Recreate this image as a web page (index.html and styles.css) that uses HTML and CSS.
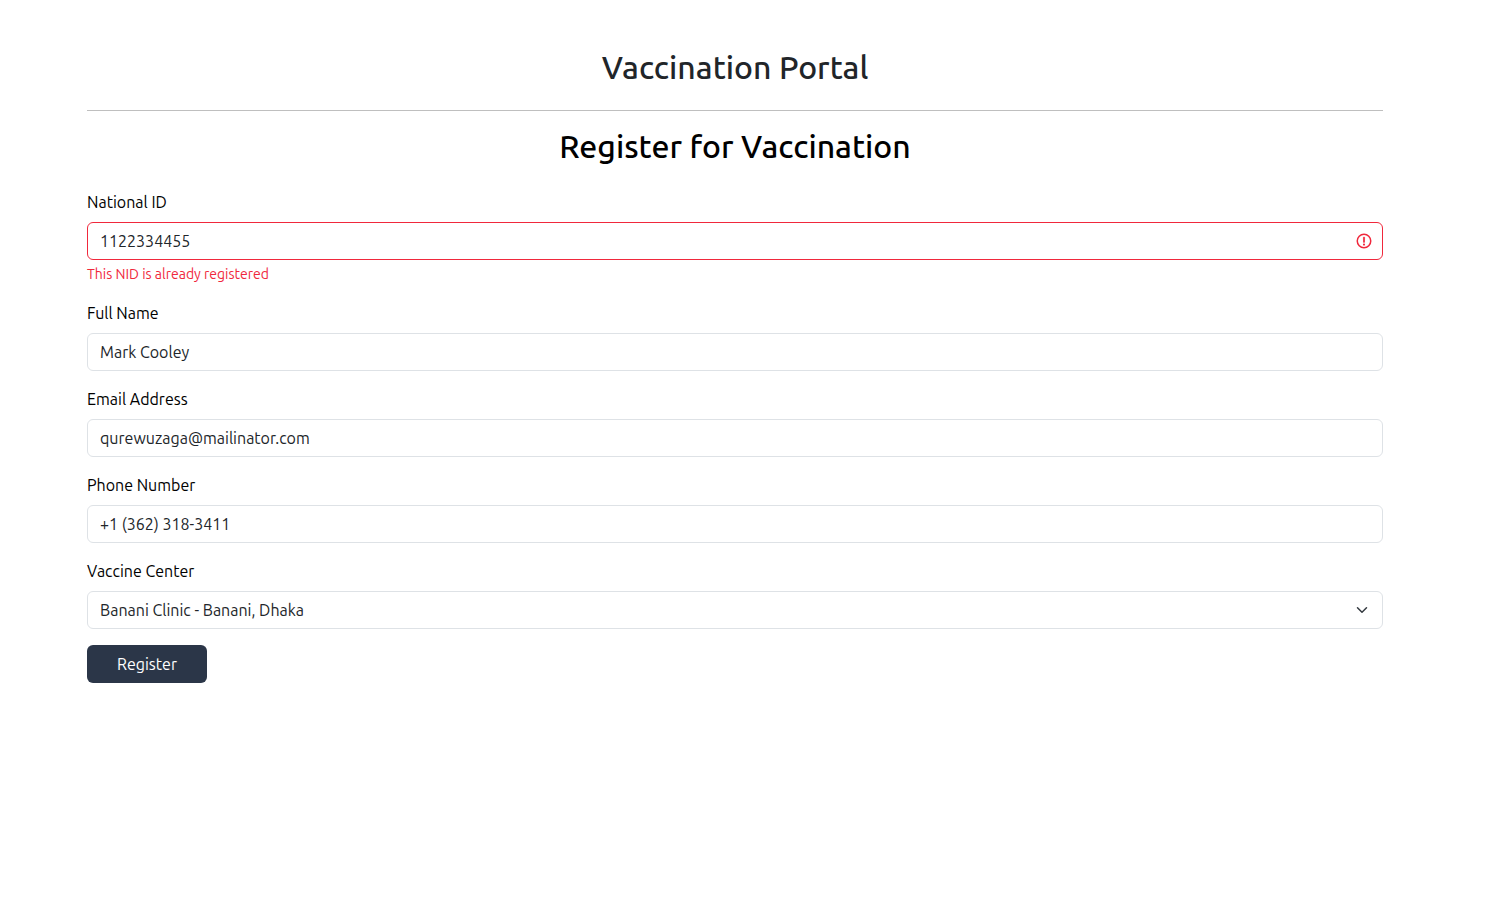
FILE: index.html
```html
<!DOCTYPE html>
<html lang="en">
<head>
  <meta charset="utf-8">
  <meta name="viewport" content="width=device-width, initial-scale=1">
  <title>Vaccination Portal</title>
  <link rel="stylesheet" href="styles.css">
</head>
<body>
  <div class="container">
    <header class="site-header">
      <h1 class="title">Vaccination Portal</h1>
    </header>
    <main>
      <h2 class="title title-form">Register for Vaccination</h2>
      <form class="form">
        <div class="field">
          <label for="nid">National ID</label>
          <div class="control-wrap">
            <input class="control control-invalid" id="nid" type="text" value="1122334455" aria-invalid="true" aria-describedby="nid-error">
            <svg class="icon-error" viewBox="0 0 12 12" fill="none" stroke="currentColor" aria-hidden="true">
              <circle cx="6" cy="6" r="4.5"/>
              <path fill="currentColor" stroke-width=".5" stroke-linejoin="round" d="M5.6 3.5h.8L6.3 6.9h-.6z"/>
              <circle cx="6" cy="8.4" r=".7" fill="currentColor" stroke="none"/>
            </svg>
          </div>
          <p class="feedback" id="nid-error">This NID is already registered</p>
        </div>
        <div class="field">
          <label for="name">Full Name</label>
          <input class="control" id="name" type="text" value="Mark Cooley">
        </div>
        <div class="field">
          <label for="email">Email Address</label>
          <input class="control" id="email" type="email" value="qurewuzaga@mailinator.com">
        </div>
        <div class="field">
          <label for="phone">Phone Number</label>
          <input class="control" id="phone" type="tel" value="+1 (362) 318-3411">
        </div>
        <div class="field">
          <label for="center">Vaccine Center</label>
          <div class="control-wrap">
            <select class="control control-select" id="center">
              <option>Banani Clinic - Banani, Dhaka</option>
            </select>
            <svg class="icon-chevron" viewBox="0 0 16 16" fill="none" stroke="currentColor" stroke-width="2" stroke-linecap="round" stroke-linejoin="round" aria-hidden="true">
              <path d="m2 5 6 6 6-6"/>
            </svg>
          </div>
        </div>
        <button class="button" type="submit">Register</button>
      </form>
    </main>
  </div>
</body>
</html>
```

FILE: styles.css
```css
*,
*::before,
*::after {
  box-sizing: border-box;
}

body {
  margin: 0;
  padding-right: 20px;
  background: #fff;
  color: #000;
  font-family: Ubuntu, "Noto Sans", sans-serif;
  font-size: 16px;
  line-height: 24px;
}

.container {
  max-width: 1320px;
  margin: 0 auto;
  padding: 48px 12px;
}

.site-header {
  padding-bottom: 23px;
  margin-bottom: 16px;
  border-bottom: 1px solid #bfbfbf;
}

.title {
  margin: 0;
  color: #212529;
  font-size: 32px;
  font-weight: 500;
  line-height: 39px;
  text-align: center;
}

.title-form {
  margin-bottom: 24px;
  color: #000;
}

.form {
  display: flex;
  flex-direction: column;
  align-items: stretch;
  gap: 16px;
}

.field label {
  display: block;
  margin-bottom: 8px;
}

.control-wrap {
  position: relative;
}

.control {
  display: block;
  width: 100%;
  height: 38px;
  margin: 0;
  padding: 6px 12px;
  border: 1px solid #dee2e6;
  border-radius: 6px;
  background: #fff;
  color: #212529;
  font: inherit;
  appearance: none;
}

.control-invalid {
  padding-right: 36px;
  border-color: #f0283c;
}

.control-select {
  padding-right: 36px;
}

.icon-error {
  position: absolute;
  top: 10px;
  right: 10px;
  width: 18px;
  height: 18px;
  color: #f0283c;
  pointer-events: none;
}

.icon-chevron {
  position: absolute;
  top: 13px;
  right: 15px;
  width: 12px;
  height: 12px;
  color: #343a40;
  pointer-events: none;
}

.feedback {
  margin: 4px 0 0;
  color: #f0283c;
  font-size: 14px;
  line-height: 21px;
}

.button {
  align-self: flex-start;
  min-width: 120px;
  height: 38px;
  padding: 6px 24px;
  border: 0;
  border-radius: 6px;
  background: #2b3648;
  color: #fff;
  font: inherit;
}
```
